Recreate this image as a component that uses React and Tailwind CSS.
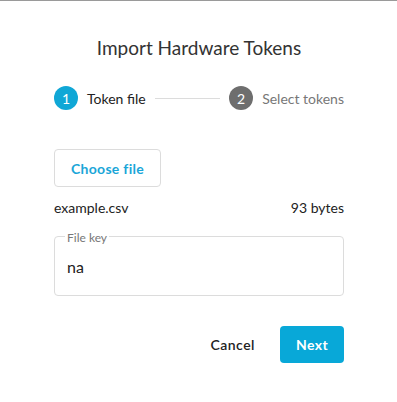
export default function App() {
  return (
    <div className="w-[397px] h-[402px] bg-white border-t border-[#9a9a9a] font-['Lato',sans-serif] text-[#222]">
      <div className="px-[54px] pr-[53px]">
        <h2 className="text-center text-[19px] text-[#333] pt-[34px] leading-[26px]">Import Hardware Tokens</h2>

        <div className="flex items-center mt-[24px] h-[26px]">
          <div className="w-6 h-6 rounded-full bg-[#10a7d6] text-white text-[14px] flex items-center justify-center">1</div>
          <span className="ml-[9px] text-[14px] text-[#222]">Token file</span>
          <div className="flex-1 h-px bg-[#dcdcdc] mx-[9px]" />
          <div className="w-6 h-6 rounded-full bg-[#6e6e6e] text-white text-[14px] flex items-center justify-center">2</div>
          <span className="ml-[9px] text-[14px] text-[#777]">Select tokens</span>
        </div>

        <button className="mt-[38px] w-[107px] h-[38px] border border-[#dcdcdc] rounded-[4px] text-[#1aa6d8] text-[14px] font-bold tracking-[0.3px]">
          Choose file
        </button>

        <div className="flex justify-between items-center mt-[10px] text-[14px] text-[#222]">
          <span>example.csv</span>
          <span>93 bytes</span>
        </div>

        <div className="relative mt-[18px] h-[60px] border border-[#dcdcdc] rounded-[4px] px-[12px]">
          <span className="absolute left-[10px] top-[-5px] bg-white px-[2px] text-[12px] text-[#777] leading-[12px]">File key</span>
          <div className="text-[16px] text-[#222] mt-[21px] leading-[18px]">na</div>
        </div>

        <div className="flex justify-end items-center mt-[30px] gap-[25px]">
          <button className="text-[14px] font-semibold text-[#222] tracking-[0.5px]">Cancel</button>
          <button className="w-[64px] h-[37px] rounded-[4px] bg-[#08a8d8] text-white text-[14px] font-bold tracking-[0.4px]">Next</button>
        </div>
      </div>
    </div>
  );
}
